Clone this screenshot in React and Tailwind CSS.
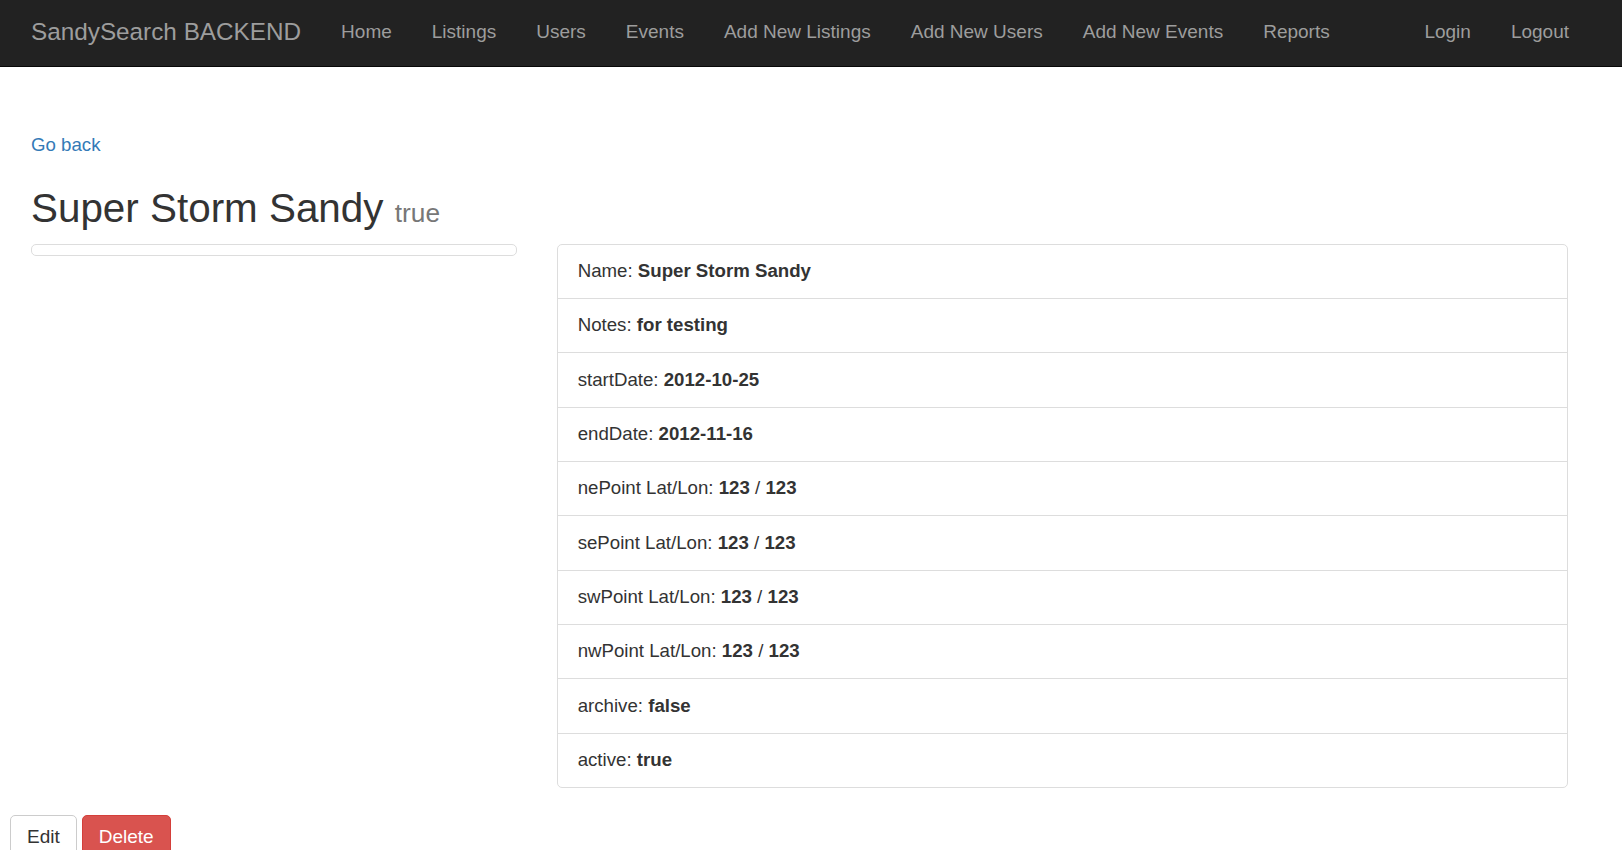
import React from 'react';

const navLinks = ['Home', 'Listings', 'Users', 'Events', 'Add New Listings', 'Add New Users', 'Add New Events', 'Reports'];

const fields = [
  { label: 'Name', value: 'Super Storm Sandy' },
  { label: 'Notes', value: 'for testing' },
  { label: 'startDate', value: '2012-10-25' },
  { label: 'endDate', value: '2012-11-16' },
  { label: 'nePoint Lat/Lon', lat: '123', lon: '123' },
  { label: 'sePoint Lat/Lon', lat: '123', lon: '123' },
  { label: 'swPoint Lat/Lon', lat: '123', lon: '123' },
  { label: 'nwPoint Lat/Lon', lat: '123', lon: '123' },
  { label: 'archive', value: 'false' },
  { label: 'active', value: 'true' },
];

const App = () => {
  return (
    <div className="h-screen overflow-hidden bg-white font-['Liberation_Sans',Arial,sans-serif] text-[18.67px] leading-[26.67px] text-[#333]">
      {/* Navbar */}
      <nav className="h-[67px] bg-[#222] border-b border-[#080808] flex items-center pb-[2px] pl-[11px] pr-[33px]">
        <a href="#" className="px-[20px] text-[24.3px] text-[#9d9d9d]">SandySearch BACKEND</a>
        {navLinks.map(link => (
          <a key={link} href="#" className="px-[20px] text-[19px] text-[#9d9d9d]">{link}</a>
        ))}
        <div className="ml-auto flex">
          <a href="#" className="px-[20px] text-[19px] text-[#9d9d9d]">Login</a>
          <a href="#" className="px-[20px] text-[19px] text-[#9d9d9d]">Logout</a>
        </div>
      </nav>

      {/* Content */}
      <div className="pl-[11px] pr-[34px] pt-[65px]">
        <div className="px-[20px]">
          <a href="#" className="text-[#337ab7]">Go back</a>
          <h2 className="mt-[27px] mb-[9px] text-[40.4px] leading-[44px] font-normal">
            Super Storm Sandy <small className="text-[26.3px] text-[#777]">true</small>
          </h2>
        </div>

        <div className="grid grid-cols-3">
          <div className="px-[20px]">
            <div className="h-[12px] border border-[#ddd] rounded-[5px]" />
          </div>
          <div className="col-span-2 px-[20px]">
            <ul className="border border-[#ddd] rounded-[5px] divide-y divide-[#ddd]">
              {fields.map(f => (
                <li key={f.label} className="px-[20px] py-[13.33px]">
                  {f.label}:{' '}
                  {f.value !== undefined ? (
                    <b>{f.value}</b>
                  ) : (
                    <><b>{f.lat}</b> / <b>{f.lon}</b></>
                  )}
                </li>
              ))}
            </ul>
          </div>
        </div>
      </div>

      {/* Actions */}
      <div className="flex gap-[5px] pl-[10px] mt-[27px] text-[19px]">
        <button className="px-[16px] py-[8px] bg-white border border-[#ccc] rounded-[5px] text-[#333]">Edit</button>
        <button className="px-[16px] py-[8px] bg-[#d9534f] border border-[#d43f3a] rounded-[5px] text-white">Delete</button>
      </div>
    </div>
  );
};

export default App;
